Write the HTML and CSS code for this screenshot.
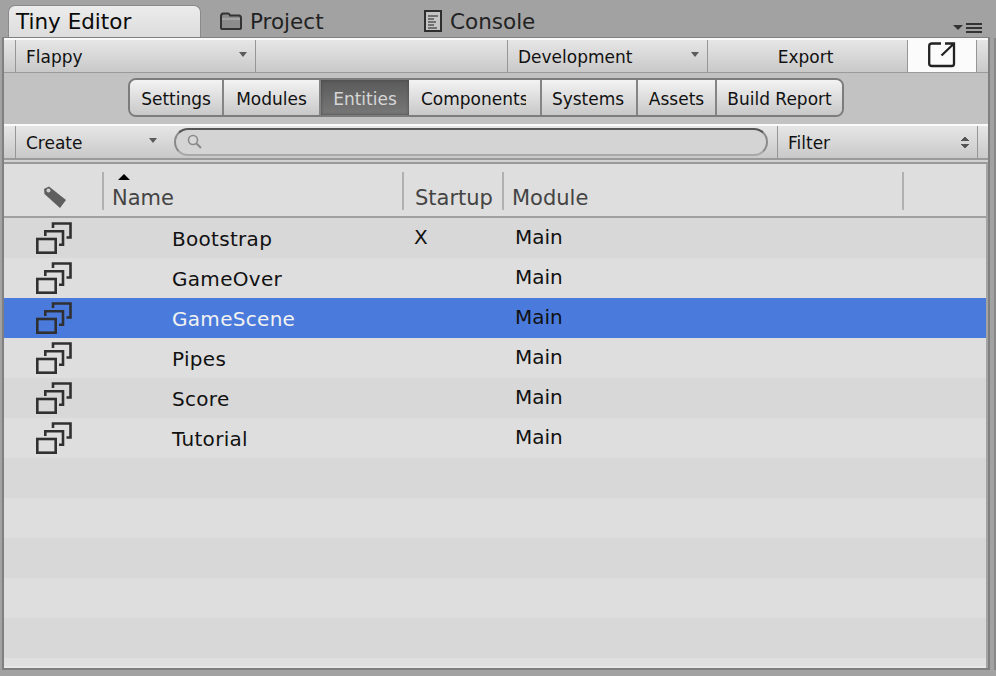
FILE: index.html
```html
<!DOCTYPE html>
<html lang="en">
<head>
    <meta charset="UTF-8">
    <meta name="viewport" content="width=device-width, initial-scale=1.0">
    <title>Tiny Editor</title>
    <link rel="stylesheet" href="styles.css">
</head>
<body>
    <div class="tabs">
        <div class="tab tab-active">Tiny Editor</div>
        <div class="tab tab-project">
            <svg class="tab-icon" width="22" height="18" viewBox="0 0 22 18">
                <path d="M1 16V4.500Q1 2 3 1.500H8Q9.500 1.500 10 3.500H19Q21 3.500 21 6V16Q21 17 19 17H3Q1 17 1 16z" fill="#8c8c8c" stroke="#333" stroke-width="2"/>
                <path d="M2 7h18" stroke="#bbb" stroke-width="1"/>
            </svg>
            Project
        </div>
        <div class="tab tab-console">
            <svg class="tab-icon" width="18" height="22" viewBox="0 0 18 22">
                <rect x="1" y="1" width="16" height="20" fill="#c4c4c4" stroke="#2e2e2e" stroke-width="2"/>
                <path d="M4 6h10M4 9h6M4 12h8M4 15h6M4 18h9" stroke="#555" stroke-width="1.500"/>
            </svg>
            Console
        </div>
        <div class="tab-menu">
            <span class="arrow arrow-small"></span>
            <span class="burger"></span>
        </div>
    </div>

    <div class="panel">
        <div class="toolbar toolbar-top">
            <div class="tool tool-flappy">Flappy<span class="arrow"></span></div>
            <div class="tool tool-blank"></div>
            <div class="tool tool-dev">Development<span class="arrow"></span></div>
            <div class="tool tool-export">Export</div>
            <div class="tool tool-open">
                <svg width="28" height="26" viewBox="0 0 28 26">
                    <path d="M13 1.500H4Q1.200 1.500 1.200 4V21.800Q1.200 24 4 24H24Q26 24 26 21.800V10" fill="none" stroke="#222" stroke-width="2.300"/>
                    <path d="M13.500 13.500L25 2.500M17 1.500H26V10" fill="none" stroke="#222" stroke-width="2.300"/>
                </svg>
            </div>
        </div>

        <div class="band">
            <div class="segments">
                <div class="seg seg-settings">Settings</div>
                <div class="seg seg-modules">Modules</div>
                <div class="seg seg-entities seg-active">Entities</div>
                <div class="seg seg-components"><span class="seg-clip">Components</span></div>
                <div class="seg seg-systems">Systems</div>
                <div class="seg seg-assets">Assets</div>
                <div class="seg seg-report">Build Report</div>
            </div>
        </div>

        <div class="toolbar toolbar-search">
            <div class="tool tool-create">Create<span class="arrow"></span></div>
            <div class="search">
                <svg width="18" height="18" viewBox="0 0 18 18">
                    <circle cx="7" cy="7" r="4.500" fill="#d8d8d8" stroke="#8a8a8a" stroke-width="1.600"/>
                    <path d="M10.500 10.500L15 15" stroke="#8a8a8a" stroke-width="2"/>
                </svg>
            </div>
            <div class="tool tool-filter">Filter<span class="updown"></span></div>
        </div>

        <div class="table">
            <div class="table-head">
                <div class="col col-tag">
                    <svg width="24" height="22" viewBox="0 0 24 22">
                        <path d="M1 3L6 .5L23 14L17 22L1.500 8z" fill="#5e5e5e"/>
                        <circle cx="5.500" cy="4.500" r="2" fill="#d0d0d0"/>
                    </svg>
                </div>
                <div class="col col-name"><span class="sort-arrow"></span>Name</div>
                <div class="col col-startup">Startup</div>
                <div class="col col-module">Module</div>
                <div class="col col-end"></div>
            </div>
            <div class="row row-dark"><svg class="entity-icon" viewBox="0 0 36 32"><use href="#entity"/></svg><span class="cell-name">Bootstrap</span><span class="cell-startup">X</span><span class="cell-module">Main</span></div>
            <div class="row row-light"><svg class="entity-icon" viewBox="0 0 36 32"><use href="#entity"/></svg><span class="cell-name">GameOver</span><span class="cell-startup"></span><span class="cell-module">Main</span></div>
            <div class="row row-selected"><svg class="entity-icon" viewBox="0 0 36 32"><use href="#entity"/></svg><span class="cell-name">GameScene</span><span class="cell-startup"></span><span class="cell-module">Main</span></div>
            <div class="row row-light"><svg class="entity-icon" viewBox="0 0 36 32"><use href="#entity"/></svg><span class="cell-name">Pipes</span><span class="cell-startup"></span><span class="cell-module">Main</span></div>
            <div class="row row-dark"><svg class="entity-icon" viewBox="0 0 36 32"><use href="#entity"/></svg><span class="cell-name">Score</span><span class="cell-startup"></span><span class="cell-module">Main</span></div>
            <div class="row row-light"><svg class="entity-icon" viewBox="0 0 36 32"><use href="#entity"/></svg><span class="cell-name">Tutorial</span><span class="cell-startup"></span><span class="cell-module">Main</span></div>
            <div class="row row-dark"></div>
            <div class="row row-light"></div>
            <div class="row row-dark"></div>
            <div class="row row-light"></div>
            <div class="row row-dark"></div>
            <div class="table-foot"></div>
        </div>
    </div>
    <div class="side-line"></div>

    <svg width="0" height="0" class="defs">
        <symbol id="entity" viewBox="0 0 36 32">
            <rect x="1.300" y="17" width="18.400" height="13.700" fill="none" stroke="#303030" stroke-width="2.600"/>
            <path d="M9.300 14V9.300H27V22.700H23" fill="none" stroke="#303030" stroke-width="2.600"/>
            <path d="M17 6V1.500H34.500V15.500H30.500" fill="none" stroke="#303030" stroke-width="2.600"/>
        </symbol>
    </svg>
</body>
</html>
```
FILE: styles.css
```css
body {
    margin: 0;
    width: 996px;
    height: 676px;
    overflow: hidden;
    position: relative;
    background-color: #a2a2a2;
    font-family: "DejaVu Sans", sans-serif;
    font-size: 17px;
    color: #111;
}

.defs {
    position: absolute;
}

/* tabs */
.tabs {
    display: flex;
    height: 32px;
    padding: 5px 0 0 8px;
    position: relative;
}
.tab {
    display: flex;
    align-items: center;
    font-size: 21.500px;
    color: #222;
    box-sizing: border-box;
}
.tab-active {
    width: 193px;
    padding-left: 7px;
    color: #0a0a0a;
    background: linear-gradient(#ececec, #dcdcdc);
    border: 1px solid #8a8a8a;
    border-bottom: 0;
    border-radius: 7px 7px 0 0;
}
.tab-project {
    margin-left: 19px;
    width: 204px;
}
.tab-console {
    width: 200px;
}
.tab-icon {
    margin-right: 8px;
}
.tab-menu {
    position: absolute;
    right: 14px;
    top: 25px;
    display: flex;
    align-items: center;
    gap: 3px;
}
.burger {
    width: 16px;
    height: 2px;
    background: #333;
    box-shadow: 0 4px 0 #333, 0 -4px 0 #333;
}

/* main panel */
.panel {
    width: 984px;
    height: 630px;
    margin-left: 2px;
    border: 2px solid #808080;
    border-top-width: 1px;
    overflow: hidden;
    background: #c2c2c2;
}
.side-line {
    position: absolute;
    right: 0;
    top: 38px;
    width: 2px;
    height: 632px;
    background: #888;
}

.toolbar {
    display: flex;
    padding-left: 11px;
    background: linear-gradient(#e6e6e6, #c9c9c9);
    border-top: 2px solid #fafafa;
    border-bottom: 1px solid #9a9a9a;
    box-sizing: border-box;
}
.toolbar-top {
    height: 35px;
}
.toolbar-search {
    height: 36px;
    border-bottom-width: 2px;
    margin-bottom: 2px;
    box-shadow: 0 2px 0 #d2d2d2;
}
.tool {
    display: flex;
    align-items: center;
    justify-content: space-between;
    box-sizing: border-box;
    padding: 2px 8px 0 10px;
    border-left: 1px solid #969696;
}
.tool-flappy {
    width: 240px;
}
.tool-blank {
    width: 252px;
}
.tool-dev {
    width: 200px;
}
.tool-export {
    width: 200px;
    justify-content: center;
    padding: 2px 12px 0 8px;
}
.tool-open {
    width: 70px;
    padding: 0 0 2px;
    justify-content: center;
    background: #fbfbfb;
    border-right: 1px solid #969696;
}
.tool-create {
    width: 150px;
}
.tool-filter {
    width: 201px;
    border-right: 1px solid #969696;
    margin-left: 9px;
}

.arrow {
    width: 0;
    height: 0;
    border-left: 4px solid transparent;
    border-right: 4px solid transparent;
    border-top: 5px solid #5a5a5a;
    margin-bottom: 5px;
}
.arrow-small {
    border-top-color: #333;
    border-left-width: 5px;
    border-right-width: 5px;
    margin: 0;
}
.updown {
    width: 8px;
    height: 13px;
    margin-bottom: 2px;
    background:
        linear-gradient(to bottom right, transparent 50%, #555 50%) left top / 4px 5px no-repeat,
        linear-gradient(to bottom left, transparent 50%, #555 50%) right top / 4px 5px no-repeat,
        linear-gradient(to top right, transparent 50%, #555 50%) left bottom / 4px 5px no-repeat,
        linear-gradient(to top left, transparent 50%, #555 50%) right bottom / 4px 5px no-repeat;
}

.search {
    width: 594px;
    height: 28px;
    margin: 2px 0 0 9px;
    padding-left: 10px;
    box-sizing: border-box;
    display: flex;
    align-items: center;
    background: #d4d4d4;
    border: 2px solid #8a8a8a;
    border-top-color: #555;
    border-bottom-color: #a8a8a8;
    border-radius: 14px;
}

/* segmented control */
.band {
    height: 51px;
    box-sizing: border-box;
    padding: 5px 0 0 124px;
}
.segments {
    display: flex;
    width: 716px;
    height: 39px;
    box-sizing: border-box;
    border: 2px solid #7c7c7c;
    border-radius: 8px;
    overflow: hidden;
}
.seg {
    display: flex;
    align-items: center;
    justify-content: center;
    box-sizing: border-box;
    padding-top: 2px;
    background: linear-gradient(#f3f3f3, #c8c8c8);
    border-right: 2px solid #848484;
}
.seg-settings {
    width: 94px;
}
.seg-modules {
    width: 97px;
}
.seg-entities {
    width: 88px;
}
.seg-components {
    width: 133px;
    justify-content: flex-start;
    padding-left: 12px;
}
.seg-clip {
    width: 105px;
    overflow: hidden;
    white-space: nowrap;
}
.seg-systems {
    width: 96px;
    padding-right: 2px;
}
.seg-assets {
    width: 79px;
}
.seg-report {
    flex: 1;
    border-right: 0;
}
.seg-active {
    color: #d6d6d6;
    background: linear-gradient(#5a5a5a, #787878);
    border-right: 0;
    box-shadow: inset 0 0 3px #444;
}

/* table */
.table {
    border-top: 2px solid #999;
    border-right: 2px solid #a4a4a4;
    background: #dedede;
}
.table-head {
    display: flex;
    height: 54px;
    box-sizing: border-box;
    padding-top: 8px;
    color: #444;
    font-size: 21px;
    border-bottom: 2px solid #a0a0a0;
}
.col {
    height: 38px;
    box-sizing: border-box;
    border-left: 2px solid #b0b0b0;
    display: flex;
    align-items: flex-end;
    padding: 0 0 0 8px;
}
.col-tag {
    width: 98px;
    border-left: 0;
    padding: 0 0 2px 39px;
}
.col-name {
    width: 300px;
    position: relative;
}
.col-startup {
    width: 100px;
    padding-left: 11px;
}
.col-module {
    width: 400px;
}
.col-end {
    width: 20px;
}
.sort-arrow {
    position: absolute;
    left: 14px;
    top: 2px;
    width: 0;
    height: 0;
    border-left: 6px solid transparent;
    border-right: 6px solid transparent;
    border-bottom: 6px solid #000;
}

.row {
    display: flex;
    align-items: center;
    height: 40px;
    font-size: 20px;
}
.row-dark {
    background: #d8d8d8;
}
.row-light {
    background: #dedede;
}
.row-selected {
    background: #4a7bdc;
}
.row-selected .cell-name {
    color: #f2f2f2;
}
.entity-icon {
    width: 36px;
    height: 32px;
    margin-left: 32px;
    flex: none;
}
.cell-name {
    width: 242px;
    margin-left: 100px;
    padding-top: 2px;
    letter-spacing: .3px;
}
.cell-startup {
    width: 101px;
    padding-bottom: 2px;
}
.cell-module {
    padding-bottom: 2px;
}
.table-foot {
    height: 8px;
    background: #e0e0e0;
    border-bottom: 2px solid #e8e8e8;
}
```
